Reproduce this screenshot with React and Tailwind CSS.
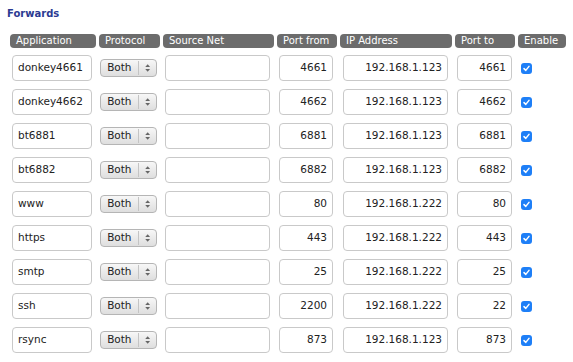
import React from "react";

const rows = [
  ["donkey4661", "4661", "192.168.1.123", "4661"],
  ["donkey4662", "4662", "192.168.1.123", "4662"],
  ["bt6881", "6881", "192.168.1.123", "6881"],
  ["bt6882", "6882", "192.168.1.123", "6882"],
  ["www", "80", "192.168.1.222", "80"],
  ["https", "443", "192.168.1.222", "443"],
  ["smtp", "25", "192.168.1.222", "25"],
  ["ssh", "2200", "192.168.1.222", "22"],
  ["rsync", "873", "192.168.1.123", "873"],
];

const heads = [
  ["Application", "w-[86px]"],
  ["Protocol", "w-[61px]"],
  ["Source Net", "w-[111px]"],
  ["Port from", "w-[60px]"],
  ["IP Address", "w-[112px]"],
  ["Port to", "w-[60px]"],
  ["Enable", "w-[48px]"],
];

function Field({ value, className, right }) {
  return (
    <div
      className={`h-[26px] rounded-[4px] border border-[#c9c9c9] bg-white flex items-center text-[10.5px] text-[#222] ${
        right ? "justify-end pr-[5px]" : "pl-[5px]"
      } ${className}`}
    >
      {value}
    </div>
  );
}

function Select() {
  return (
    <div className="ml-[1px] h-[18px] w-[57px] rounded-[4px] border border-[#b5b5b5] bg-gradient-to-b from-[#f7f7f7] to-[#dedede] flex items-center text-[10.5px] text-[#222]">
      <span className="w-[38px] text-center">Both</span>
      <span className="h-[14px] w-px bg-[#c4c4c4]" />
      <svg width="18" height="14" viewBox="0 0 18 14">
        <path d="M6.5 6 L9 3 L11.5 6 Z" fill="#666" />
        <path d="M6.5 8 L9 11 L11.5 8 Z" fill="#666" />
      </svg>
    </div>
  );
}

function Check() {
  return (
    <div className="ml-[3px] h-[11px] w-[11px] rounded-[3px] bg-[#1e7ff7] flex items-center justify-center">
      <svg width="9" height="9" viewBox="0 0 9 9">
        <path d="M2 4.6 L3.8 6.4 L7 2.4" stroke="white" strokeWidth="1.5" fill="none" strokeLinecap="round" strokeLinejoin="round" />
      </svg>
    </div>
  );
}

export default function App() {
  return (
    <div className="w-[573px] h-[362px] bg-white overflow-hidden" style={{ fontFamily: '"DejaVu Sans", Verdana, sans-serif' }}>
      <div className="pl-[7px] pt-[7px] text-[10px] font-bold text-[#2b3a92] leading-[14px]">Forwards</div>
      <div className="pl-[10px] pt-[13px] flex gap-[3px]">
        {heads.map(([h, w]) => (
          <div
            key={h}
            className={`${w} h-[14px] rounded-[4px] bg-[#6c6c6c] text-white text-[10px] leading-[14px] pl-[6px]`}
          >
            {h}
          </div>
        ))}
      </div>
      <div className="pl-[10px] pt-[7px] flex flex-col gap-[8px]">
        {rows.map((r) => (
          <div key={r[0]} className="flex gap-[3px] items-center">
            <div className="w-[86px]">
              <Field value={r[0]} className="ml-[2px] w-[80px]" />
            </div>
            <div className="w-[61px]">
              <Select />
            </div>
            <div className="w-[111px]">
              <Field value="" className="ml-[2px] w-[105px]" />
            </div>
            <div className="w-[60px]">
              <Field value={r[1]} right className="ml-[2px] w-[54px]" />
            </div>
            <div className="w-[112px]">
              <Field value={r[2]} right className="ml-[3px] w-[105px]" />
            </div>
            <div className="w-[60px]">
              <Field value={r[3]} right className="ml-[2px] w-[55px]" />
            </div>
            <div className="w-[48px]">
              <Check />
            </div>
          </div>
        ))}
      </div>
    </div>
  );
}
